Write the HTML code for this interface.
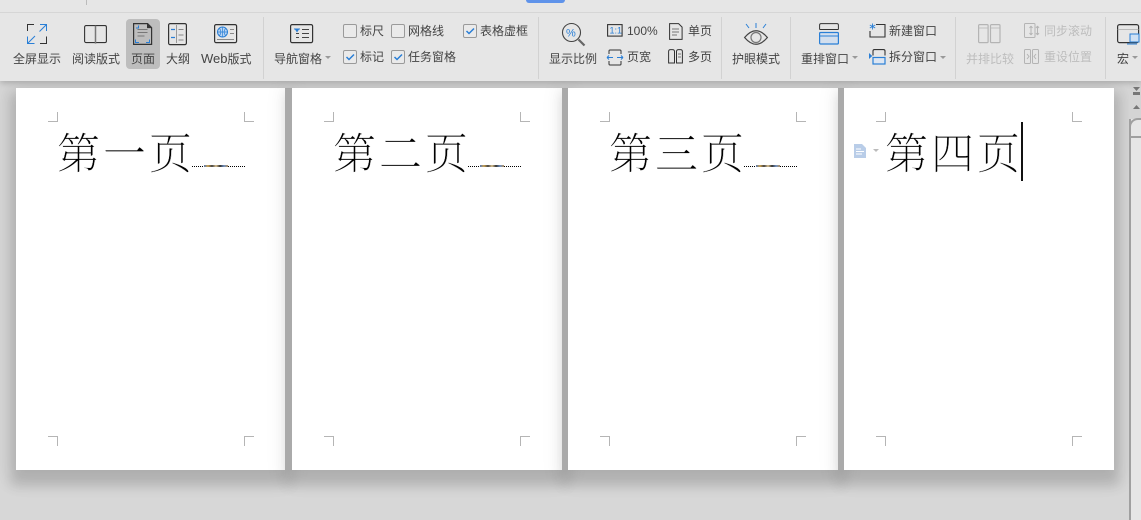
<!DOCTYPE html>
<html><head><meta charset="utf-8">
<style>
html,body{margin:0;padding:0}
body{width:1141px;height:520px;overflow:hidden;background:#d7d7d7;position:relative;font-family:"Liberation Sans","Noto Sans CJK SC",sans-serif;}
.rib{position:absolute;left:0;top:0;width:1141px;height:81px;background:#e6e6e6;z-index:5;box-shadow:0 2px 6px rgba(0,0,0,.2)}
.t{position:absolute;font-size:12px;line-height:16px;color:#444;white-space:nowrap}
.d{color:#bdbdbd}
.sep{position:absolute;top:17px;width:1px;height:62px;background:#d2d2d2}
svg{position:absolute;overflow:visible}
.cb{position:absolute;width:12px;height:12px;border:1px solid #9a9a9a;border-radius:2px;background:#eaeaea}
.cb svg{left:1px;top:1px}
.page{position:absolute;top:88px;height:382px;background:#fff;box-shadow:0 11px 11px 5px rgba(0,0,0,.13),0 3px 20px 7px rgba(0,0,0,.08);z-index:1}
.gap{position:absolute;top:88px;width:7px;height:382px;background:#aaa;z-index:2}
.cn{position:absolute;width:9px;height:9px;border:0 solid #b5b5b5}
.h{position:absolute;top:40px;font-family:"Liberation Serif","Noto Serif CJK SC",serif;font-size:43px;line-height:56px;color:#000;white-space:nowrap;font-weight:200;letter-spacing:3px;-webkit-text-stroke:.25px #fff}
.dots{position:absolute;top:78px;height:0;border-top:1px dotted #000}
.mk{position:absolute;top:77px;height:2px;background:linear-gradient(90deg,#5a7ab0,#c9a050,#444,#d8c090,#333,#7090c0,#b09060);}
</style></head><body>
<div class="page" style="left:16px;width:269px"><div class="cn" style="left:32px;top:24px;border-right-width:1px;border-bottom-width:1px"></div><div class="cn" style="left:228px;top:24px;border-left-width:1px;border-bottom-width:1px"></div><div class="cn" style="left:32px;top:348px;border-right-width:1px;border-top-width:1px"></div><div class="cn" style="left:228px;top:348px;border-left-width:1px;border-top-width:1px"></div><div class="h" style="left:41px">第一页</div><div class="dots" style="left:176px;width:53px"></div><div class="mk" style="left:188px;width:24px"></div></div>
<div class="page" style="left:292px;width:270px"><div class="cn" style="left:32px;top:24px;border-right-width:1px;border-bottom-width:1px"></div><div class="cn" style="left:228px;top:24px;border-left-width:1px;border-bottom-width:1px"></div><div class="cn" style="left:32px;top:348px;border-right-width:1px;border-top-width:1px"></div><div class="cn" style="left:228px;top:348px;border-left-width:1px;border-top-width:1px"></div><div class="h" style="left:41px">第二页</div><div class="dots" style="left:176px;width:53px"></div><div class="mk" style="left:188px;width:24px"></div></div>
<div class="page" style="left:568px;width:270px"><div class="cn" style="left:32px;top:24px;border-right-width:1px;border-bottom-width:1px"></div><div class="cn" style="left:228px;top:24px;border-left-width:1px;border-bottom-width:1px"></div><div class="cn" style="left:32px;top:348px;border-right-width:1px;border-top-width:1px"></div><div class="cn" style="left:228px;top:348px;border-left-width:1px;border-top-width:1px"></div><div class="h" style="left:41px">第三页</div><div class="dots" style="left:176px;width:53px"></div><div class="mk" style="left:188px;width:24px"></div></div>
<div class="page" style="left:844px;width:270px"><div class="cn" style="left:32px;top:24px;border-right-width:1px;border-bottom-width:1px"></div><div class="cn" style="left:228px;top:24px;border-left-width:1px;border-bottom-width:1px"></div><div class="cn" style="left:32px;top:348px;border-right-width:1px;border-top-width:1px"></div><div class="cn" style="left:228px;top:348px;border-left-width:1px;border-top-width:1px"></div><div class="h" style="left:41px">第四页</div>
<div style="position:absolute;left:177px;top:34px;width:2px;height:59px;background:#111"></div>
<svg style="left:10px;top:56px" width="22" height="14"><path d="M0 0h8l4 4v10H0z" fill="#b9cde8"/><path d="M2 5h5M2 7.500h8M2 10h6" stroke="#fff" fill="none"/><path d="M19 5h6l-3 3z" fill="#bbb"/></svg>
</div>
<div class="gap" style="left:285px"></div><div class="gap" style="left:562px;width:6px"></div><div class="gap" style="left:838px;width:6px"></div>

<div style="position:absolute;left:1129px;top:81px;width:12px;height:439px;background:#e6e6e6;border-left:2px solid #a0a0a0;box-sizing:border-box;z-index:3"></div>
<div style="position:absolute;left:1129px;top:81px;width:12px;height:38px;background:#d4d4d4;z-index:4"><svg style="left:4px;top:6px" width="8" height="26"><path d="M0 0h7l-3.500 4z" fill="#777"/><path d="M0 5h7v3H0z" fill="#777"/><path d="M0 22l3.500-4 3.500 4z" fill="#777"/></svg></div>
<div style="position:absolute;left:1129px;top:118px;width:13px;height:20px;background:#e6e6e6;border:2px solid #a0a0a0;border-right:0;border-radius:9px 0 0 0;box-sizing:border-box;z-index:4"></div>

<div class="rib">
<div style="position:absolute;left:0;top:12px;width:1141px;height:1px;background:#d6d6d6"></div>
<div style="position:absolute;left:86px;top:0;width:1px;height:5px;background:#bbb"></div>
<div style="position:absolute;left:526px;top:0;width:39px;height:3px;background:#5f93ea;border-radius:0 0 8px 8px"></div>

<div style="position:absolute;left:126px;top:19px;width:34px;height:50px;background:#bdbdbd;border-radius:4px"></div>

<div class="sep" style="left:263px"></div><div class="sep" style="left:538px"></div><div class="sep" style="left:721px"></div><div class="sep" style="left:790px"></div><div class="sep" style="left:955px"></div><div class="sep" style="left:1105px"></div>

<div class="t" style="left:13px;top:51px">全屏显示</div>
<div class="t" style="left:72px;top:51px">阅读版式</div>
<div class="t" style="left:131px;top:51px">页面</div>
<div class="t" style="left:166px;top:51px">大纲</div>
<div class="t" style="left:201px;top:51px"><span style="font-size:13px">Web</span>版式</div>
<div class="t" style="left:274px;top:51px">导航窗格</div>
<svg style="left:325px;top:56px" width="6" height="4"><path d="M0 0h6l-3 3z" fill="#999"/></svg>

<!-- icons -->
<svg style="left:27px;top:24px" width="21" height="20" fill="none" stroke-width="1"><path d="M.5 7V.5H7M19.500 12.500v7H13" stroke="#333"/><path d="M13 .5h6.500V7M19.500 .5L12.500 7.500M.5 12.500v7H7.500M.5 19.500L8 12" stroke="#2a7fd6"/></svg>
<svg style="left:84px;top:25px" width="23" height="19" fill="none" stroke="#333" stroke-width="1.100"><rect x=".6" y=".6" width="21.800" height="17" rx="1.500"/><path d="M11.500 .6v18" stroke="#777" stroke-width="1.500"/></svg>
<svg style="left:133px;top:23px" width="20" height="22" fill="none"><path d="M.6 .6h14l4 4v16.800H.6z" stroke="#333" stroke-width="1.200"/><path d="M14 .6v4.500h5z" fill="#333"/><path d="M4.500 6.500h10M4.500 9.500h10M4.500 13h7" stroke="#777"/><path d="M5.500 2.500v2.500H3M2.500 16.500v3H6M16.500 16.500v3H13" stroke="#2a7fd6"/></svg>
<svg style="left:168px;top:23px" width="19" height="22" fill="none" stroke-width="1"><rect x=".6" y=".6" width="17.800" height="21" rx="1.500" stroke="#333" stroke-width="1.200"/><path d="M3 6.500h4M3 14.500h4" stroke="#2a7fd6" stroke-width="1.200"/><path d="M8.500 2v18" stroke="#999"/><path d="M10.500 6.500h5M10.500 12h5M10.500 17h5" stroke="#888"/></svg>
<svg style="left:214px;top:24px" width="24" height="20" fill="none"><rect x=".6" y=".6" width="22" height="18" rx="1.500" stroke="#333" stroke-width="1.200"/><circle cx="8.500" cy="8" r="5" fill="#bcd6f2" stroke="#2a7fd6"/><path d="M3.500 8h10M8.500 3v10M5.500 4.500c2 2.500 2 4.500 0 7M11.500 4.500c-2 2.500-2 4.500 0 7" stroke="#2a7fd6" stroke-width=".7"/><path d="M16 5.500h4M16 9.500h4M3 15.500h17" stroke="#888"/></svg>
<svg style="left:290px;top:24px" width="23" height="19" fill="none"><rect x=".6" y=".6" width="22" height="18" rx="1.500" stroke="#333" stroke-width="1.200"/><path d="M4 4.500h6v1h-1l-2 3-2-3H4z" fill="#2a7fd6"/><path d="M12 5.500h7M12 9.500h7M12 13.500h7M6 9.500h3M6 13.500h3" stroke="#444"/></svg>

<!-- checkboxes -->
<div class="cb" style="left:343px;top:24px"></div><div class="t" style="left:360px;top:23px">标尺</div>
<div class="cb" style="left:391px;top:24px"></div><div class="t" style="left:408px;top:23px">网格线</div>
<div class="cb" style="left:463px;top:24px"><svg width="10" height="10" fill="none"><path d="M1.500 5l2.500 2.500 5-5" stroke="#2a7fd6" stroke-width="1.500"/></svg></div><div class="t" style="left:480px;top:23px">表格虚框</div>
<div class="cb" style="left:343px;top:50px"><svg width="10" height="10" fill="none"><path d="M1.500 5l2.500 2.500 5-5" stroke="#2a7fd6" stroke-width="1.500"/></svg></div><div class="t" style="left:360px;top:49px">标记</div>
<div class="cb" style="left:391px;top:50px"><svg width="10" height="10" fill="none"><path d="M1.500 5l2.500 2.500 5-5" stroke="#2a7fd6" stroke-width="1.500"/></svg></div><div class="t" style="left:408px;top:49px">任务窗格</div>

<!-- zoom -->
<svg style="left:562px;top:23px" width="24" height="24" fill="none"><circle cx="9.500" cy="9.500" r="9" stroke="#444" stroke-width="1.100"/><path d="M16.500 16.500l6 6" stroke="#666" stroke-width="2.200"/><text x="4" y="13.500" font-size="11" fill="#2a7fd6" font-family="Liberation Sans">%</text></svg>
<div class="t" style="left:549px;top:51px">显示比例</div>
<svg style="left:607px;top:24px" width="16" height="13" fill="none"><rect x=".6" y=".6" width="14.500" height="11.500" stroke="#333" stroke-width="1.100"/><text x="2.500" y="9.500" font-size="9" fill="#2a7fd6" font-family="Liberation Sans">1:1</text></svg>
<div class="t" style="left:627px;top:23px">100%</div>
<svg style="left:669px;top:23px" width="14" height="17" fill="none" stroke-width="1"><path d="M.6 .6h9l3.500 3.500v12.300H.6z" stroke="#333"/><path d="M3 6h7M3 9h7M3 12h5" stroke="#777"/></svg>
<div class="t" style="left:688px;top:23px">单页</div>
<svg style="left:607px;top:49px" width="17" height="17" fill="none" stroke-width="1"><path d="M2 5V2q0-1 1-1h10q1 0 1 1v3M2 12v3q0 1 1 1h10q1 0 1-1v-3" stroke="#333"/><path d="M0 8.500h6M0 8.500l2-2M0 8.500l2 2M16 8.500h-6M16 8.500l-2-2M16 8.500l-2 2" stroke="#2a7fd6"/></svg>
<div class="t" style="left:627px;top:49px">页宽</div>
<svg style="left:668px;top:49px" width="15" height="15" fill="none" stroke-width="1"><path d="M.6 2.500Q.6 .6 2.500 .6h2Q6.500 .6 6.500 2.500v11.500H.6zM8.500 2.500Q8.500 .6 10.500 .6h2Q14.400 .6 14.400 2.500v11.500H8.500z" stroke="#333"/><path d="M10 5h3M10 8h3" stroke="#777"/></svg>
<div class="t" style="left:688px;top:49px">多页</div>

<svg style="left:744px;top:23px" width="24" height="23" fill="none"><path d="M.6 14.500Q12 1 23.400 14.500Q12 28 .6 14.500z" stroke="#444" stroke-width="1.200"/><circle cx="12" cy="14.500" r="5" stroke="#777" stroke-width="1.200"/><path d="M12 0v5M2 1l3 4M22 1l-3 4" stroke="#2a7fd6"/></svg>
<div class="t" style="left:732px;top:51px">护眼模式</div>

<svg style="left:819px;top:23px" width="21" height="22" fill="none"><path d="M.6 6.500V2Q.6 .6 2 .6h16Q19.400 .6 19.400 2v4.500M.6 6.500h18.800" stroke="#333" stroke-width="1"/><rect x=".6" y="9.500" width="18.800" height="11.500" rx="1" fill="#d3dfee" stroke="#2a7fd6" stroke-width="1.200"/><path d="M.6 13h18.800" stroke="#2a7fd6"/></svg>
<div class="t" style="left:801px;top:51px">重排窗口</div>
<svg style="left:852px;top:56px" width="6" height="4"><path d="M0 0h6l-3 3z" fill="#999"/></svg>
<svg style="left:869px;top:23px" width="17" height="15" fill="none"><path d="M7 1.500h9v12.500H1V8" stroke="#333" stroke-width="1.100"/><path d="M3.500 .5v6M.8 2l5.400 3M6.200 2L.8 5" stroke="#2a7fd6" stroke-width=".9"/></svg>
<div class="t" style="left:889px;top:23px">新建窗口</div>
<svg style="left:869px;top:49px" width="17" height="16" fill="none"><path d="M4 6.500V2Q4 .6 5.400 .6h9Q16 .6 16 2v4.500" stroke="#333" stroke-width="1.100"/><rect x="4" y="8.500" width="12" height="6.500" fill="#dde6f2" stroke="#2a7fd6" stroke-width="1.200"/><path d="M0 4l3.300 3L0 10z" fill="#2a7fd6"/></svg>
<div class="t" style="left:889px;top:49px">拆分窗口</div>
<svg style="left:940px;top:56px" width="6" height="4"><path d="M0 0h6l-3 3z" fill="#999"/></svg>

<svg style="left:978px;top:24px" width="23" height="20" fill="none" stroke="#b4b4b4" stroke-width="1.200"><rect x=".6" y=".6" width="9.500" height="18" rx="1"/><rect x="12.500" y=".6" width="9.500" height="18" rx="1"/><path d="M.6 4h9.500M12.500 4h9.500" stroke-width=".8"/></svg>
<div class="t d" style="left:966px;top:51px">并排比较</div>
<svg style="left:1024px;top:23px" width="16" height="15" fill="none" stroke="#b4b4b4"><rect x=".5" y=".5" width="10.500" height="14" rx="1"/><path d="M7 3v9M7 3l-1.500 2M7 3l1.500 2M7 12l-1.500-2M7 12l1.500-2M13.500 3v9M13.500 3l-1.500 2M13.500 3l1.500 2M13.500 12l-1.500-2M13.500 12l1.500-2"/></svg>
<div class="t d" style="left:1044px;top:23px">同步滚动</div>
<svg style="left:1024px;top:49px" width="15" height="15" fill="none" stroke="#b4b4b4"><rect x=".5" y=".5" width="6" height="14" rx="1"/><rect x="8.500" y=".5" width="6" height="14" rx="1"/><path d="M3 5l2 2.500-2 2.500M12 5l-2 2.500 2 2.500"/></svg>
<div class="t d" style="left:1044px;top:49px">重设位置</div>

<svg style="left:1117px;top:24px" width="23" height="21" fill="none"><rect x=".6" y=".6" width="21" height="18" rx="2" stroke="#333" stroke-width="1.200"/><path d="M.6 5.500h21" stroke="#aaa" stroke-width=".8"/><path d="M13 10h9v8h-9z" fill="#cfe0f3" stroke="#2a7fd6"/><path d="M10 20h10" stroke="#2a7fd6"/></svg>
<div class="t" style="left:1117px;top:51px">宏</div>
<svg style="left:1132px;top:56px" width="6" height="4"><path d="M0 0h6l-3 3z" fill="#999"/></svg>
</div>
</body></html>
